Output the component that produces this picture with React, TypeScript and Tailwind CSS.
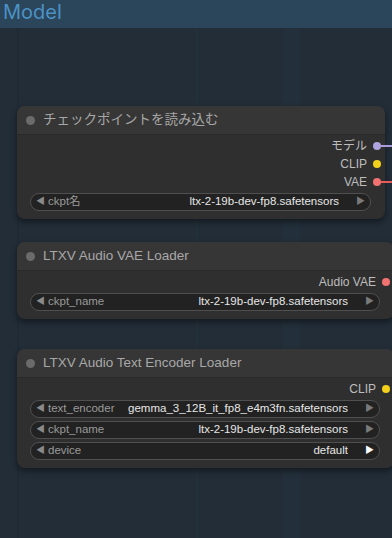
import React from "react";

type Output = { label: string; color: string; wire?: string };
type Widget = { label: string; value: string; active?: boolean };

interface NodeProps {
  title: string;
  width: string;
  outputs: Output[];
  widgets: Widget[];
}

const font = { fontFamily: "'Liberation Sans', 'Noto Sans CJK JP', sans-serif" };

const WidgetRow: React.FC<Widget> = ({ label, value, active }) => (
  <div className="flex items-center h-[18px] rounded-full bg-[#222222] border border-[#4f4f4f] pl-[5px] pr-[5px] text-[11.5px]">
    <span className="text-[9px] text-[#8a8a8a] w-[12px] shrink-0">◀</span>
    <span className="text-[#9a9a9a] flex-1 whitespace-nowrap pr-[6px]">{label}</span>
    <span className="text-[#e6e6e6] whitespace-nowrap overflow-hidden">{value}</span>
    <span
      className={`text-[9px] w-[26px] shrink-0 text-right ${active ? "text-white" : "text-[#7a7a7a]"}`}
    >
      ▶
    </span>
  </div>
);

const Node: React.FC<NodeProps> = ({ title, width, outputs, widgets }) => (
  <div
    className={`${width} rounded-lg bg-[#2f2f2f] shadow-[0_3px_6px_rgba(0,0,0,0.45)]`}
  >
    <div className="h-[29px] flex items-center gap-[8px] pl-[9px] rounded-t-lg bg-[#363636] border-b border-[#2a2a2a]">
      <span className="w-[9px] h-[9px] rounded-full bg-[#6b6b6b]" />
      <span className="text-[13.5px] text-[#a8a8a8]">{title}</span>
    </div>
    <div className="pt-[2px] pb-[8px]">
      {outputs.map((o) => (
        <div key={o.label} className="relative flex items-center justify-end h-[18px] pr-[4px] gap-[6px]">
          <span className="text-[12px] text-[#bdbdbd]">{o.label}</span>
          <span className="w-[8px] h-[8px] rounded-full" style={{ background: o.color }} />
          {o.wire && (
            <span
              className="absolute right-[-8px] w-[12px] h-[2px] top-[8px]"
              style={{ background: o.wire }}
            />
          )}
        </div>
      ))}
      <div className="flex flex-col gap-[3px] mt-[2px] pl-[13px] pr-[14px]">
        {widgets.map((w) => (
          <WidgetRow key={w.label} {...w} />
        ))}
      </div>
    </div>
  </div>
);

export default function App() {
  return (
    <div
      className="w-[392px] h-[538px] overflow-hidden bg-[#222d38] flex flex-col"
      style={font}
    >
      <div className="h-[28px] shrink-0 bg-[#2b455b] flex items-start px-[3px]">
        <span className="text-[20px] leading-[25px] text-[#4b91c4] font-['Inter',sans-serif]">
          Model
        </span>
      </div>
      <div className="flex-1 bg-[linear-gradient(90deg,transparent_17px,#1f2a34_17px,#1f2a34_19px,transparent_19px,transparent_196px,#243039_196px,#243039_198px,transparent_198px,transparent_283px,#232f3a_283px,#232f3a_300px,transparent_300px)]">
        <div className="pl-[17px] pt-[78px] flex flex-col">
          <Node
            title="チェックポイントを読み込む"
            width="w-[368px]"
            outputs={[
              { label: "モデル", color: "#b0a4de", wire: "#a99bdc" },
              { label: "CLIP", color: "#f2cf1a" },
              { label: "VAE", color: "#f27272", wire: "#e65a5a" },
            ]}
            widgets={[{ label: "ckpt名", value: "ltx-2-19b-dev-fp8.safetensors" }]}
          />
          <div className="h-[23px]" />
          <Node
            title="LTXV Audio VAE Loader"
            width="w-[377px]"
            outputs={[{ label: "Audio VAE", color: "#f27272" }]}
            widgets={[{ label: "ckpt_name", value: "ltx-2-19b-dev-fp8.safetensors" }]}
          />
          <div className="h-[30px]" />
          <Node
            title="LTXV Audio Text Encoder Loader"
            width="w-[377px]"
            outputs={[{ label: "CLIP", color: "#f2cf1a" }]}
            widgets={[
              { label: "text_encoder", value: "gemma_3_12B_it_fp8_e4m3fn.safetensors" },
              { label: "ckpt_name", value: "ltx-2-19b-dev-fp8.safetensors" },
              { label: "device", value: "default", active: true },
            ]}
          />
        </div>
      </div>
    </div>
  );
}
